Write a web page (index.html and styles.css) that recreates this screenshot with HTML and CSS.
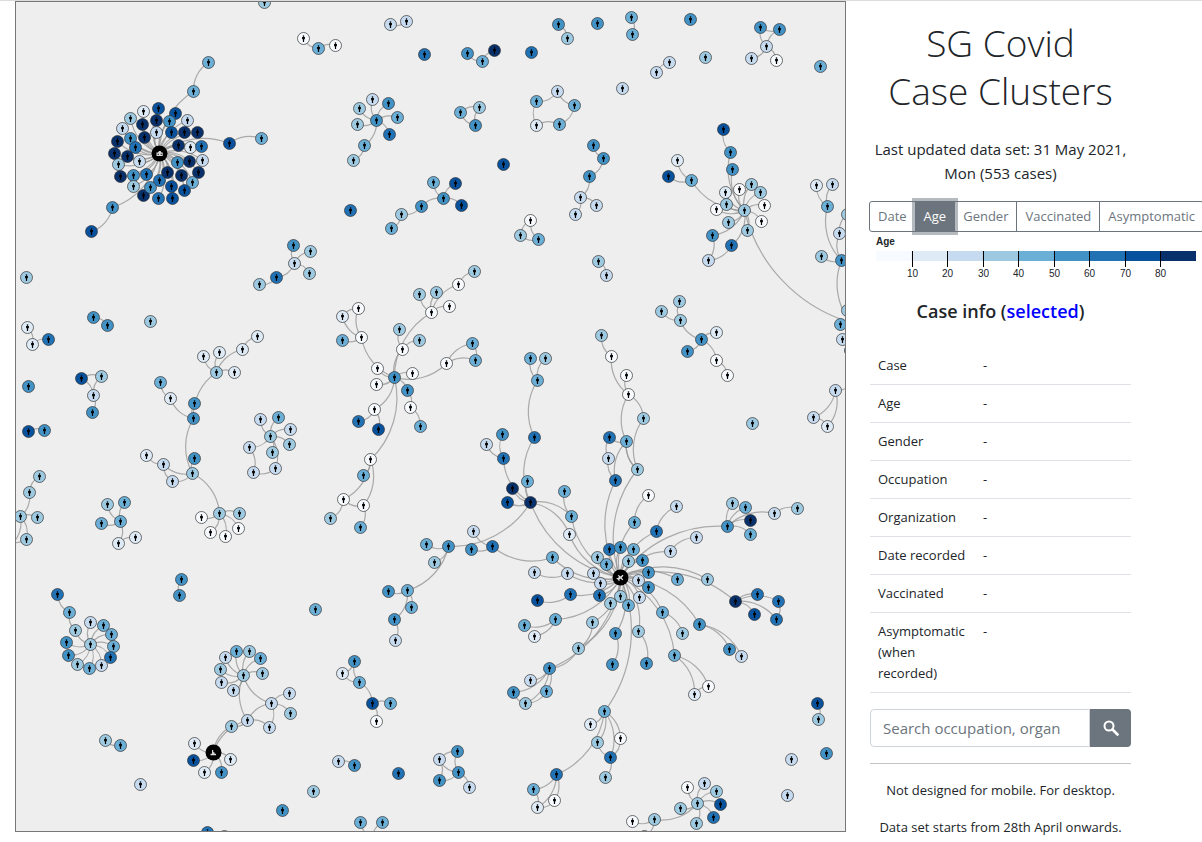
FILE: index.html
```html
<!DOCTYPE html>
<html lang="en">
<head>
<meta charset="utf-8">
<title>SG Covid Case Clusters</title>
<link rel="stylesheet" href="styles.css">
</head>
<body>
<div class="layout">
  <main class="graph">
    <svg class="graph-canvas" id="graph" viewBox="15.5 1.5 829 829" role="img" aria-label="Case clusters">
      <defs>
        <g id="person">
          <circle cx="0" cy="-2.4" r="0.8"/>
          <path d="M-1.4-1.4H1.4V0.8H0.6V3.4H-0.6V0.8H-1.4Z"/>
        </g>
      </defs>
      <g id="links" class="links"></g>
      <g id="nodes"></g>
      <g class="hub-icon">
        <path fill-rule="evenodd" d="M156 155.500v-3.500h1.500l1-1.500h1.500l1 1.500h1.200v3.500zM157.200 154.500h1v-1.200h-1zM160.200 154.500h1v-1.200h-1z"/>
        <path d="M618 574.500l2.200 1.500 1.800-1.800 1 1-1.800 1.800 1.500 2.200-.8.600-2-1.700-1 1 .2 1.200-.700.500-.9-1.800-1.700-.8.600-.7 1.100.1 1-1-1.300-1.500z"/>
        <path d="M211.500 749.500h1.200v2.200h1.300v1.500h1.500v1.500h-5.500v-1.500h1.500z"/>
      </g>
    </svg>
  </main>
  <aside class="side">
    <h1 class="title">SG Covid<br>Case Clusters</h1>
    <p class="updated">Last updated data set: 31 May 2021, Mon (553 cases)</p>
    <div class="btn-group" role="group" aria-label="Colour by">
      <button type="button" class="btn">Date</button>
      <button type="button" class="btn btn-active" aria-pressed="true">Age</button>
      <button type="button" class="btn">Gender</button>
      <button type="button" class="btn">Vaccinated</button>
      <button type="button" class="btn">Asymptomatic</button>
    </div>
    <svg class="legend" id="legend" width="332" height="50" viewBox="0 0 332 50" aria-label="Age legend">
      <text class="legend-title" x="6" y="13">Age</text>
    </svg>
    <h2 class="info-title">Case info (<a href="#selected">selected</a>)</h2>
    <table class="info" id="selected">
      <tbody>
        <tr><th scope="row">Case</th><td>-</td></tr>
        <tr><th scope="row">Age</th><td>-</td></tr>
        <tr><th scope="row">Gender</th><td>-</td></tr>
        <tr><th scope="row">Occupation</th><td>-</td></tr>
        <tr><th scope="row">Organization</th><td>-</td></tr>
        <tr><th scope="row">Date recorded</th><td>-</td></tr>
        <tr><th scope="row">Vaccinated</th><td>-</td></tr>
        <tr><th scope="row">Asymptomatic (when recorded)</th><td>-</td></tr>
      </tbody>
    </table>
    <form class="search">
      <input class="search-input" type="text" aria-label="Search cases" placeholder="Search occupation, organ">
      <button class="search-btn" type="button" aria-label="Search">
        <svg width="16" height="16" viewBox="0 0 16 16" fill="none" stroke="#fff"><circle cx="6" cy="6" r="4.500" stroke-width="2"/><path d="M9.500 9.500l5 5" stroke-width="2.600" stroke-linecap="round"/></svg>
      </button>
    </form>
    <hr class="rule">
    <p class="note">Not designed for mobile. For desktop.</p>
    <p class="note">Data set starts from 28th April onwards.</p>
  </aside>
</div>
<script src="graph.js"></script>
</body>
</html>
```

FILE: styles.css
```css
*, *::before, *::after { box-sizing: border-box; }

body {
  margin: 0;
  overflow-x: hidden;
  border-top: 1px solid #dcdce0;
  background: #fff;
  color: #212529;
  font-family: "Open Sans", "Noto Sans", sans-serif;
  font-size: 15px;
  line-height: 24px;
}

.layout {
  display: grid;
  grid-template-columns: minmax(0, 1fr) 261px;
  gap: 24px;
  padding-left: 15px;
  padding-right: 71px;
  align-items: start;
}

.graph-canvas {
  display: block;
  width: 100%;
  border: 1px solid #777;
  background: #eee;
}
.links { fill: none; stroke: #999; stroke-opacity: .8; stroke-width: 1.2; }
.node { stroke: #333; stroke-width: .7; }
.hub { fill: #000; }
.hub-icon { fill: #ddd; }

.side { padding-top: 18px; text-align: center; }

.title {
  margin: 0 0 22px;
  font-size: 37px;
  font-weight: 300;
  line-height: 48px;
}
.updated { margin: 0 -8px 16px; }

.btn-group { display: flex; width: max-content; }
.btn {
  margin: 0 0 0 -1px;
  padding: 4px 8px;
  border: 1px solid #6c757d;
  background: #fff;
  color: #6c757d;
  font: inherit;
  font-size: 13px;
  line-height: 21px;
}
.btn:first-child { border-radius: 3px 0 0 3px; }
.btn:last-child { border-radius: 0 3px 3px 0; }
.btn-active {
  position: relative;
  background: #6c757d;
  color: #fff;
  box-shadow: 0 0 0 3px rgba(108, 117, 125, .5);
}

.legend {
  display: block;
  font-family: "Liberation Sans", Arial, sans-serif;
  font-size: 10px;
  fill: #212529;
}
.legend-title { font-weight: 700; }
.legend-tick { stroke: #000; shape-rendering: crispEdges; }

.info-title {
  margin: 17px 0 24px;
  font-size: 18px;
  font-weight: 600;
  line-height: 24px;
}
.info-title a { color: #00f; text-decoration: none; }

.info {
  width: 100%;
  table-layout: fixed;
  border-collapse: collapse;
  font-size: 13px;
  line-height: 21px;
  text-align: left;
}
.info th, .info td {
  padding: 8px;
  border-bottom: 1px solid #dee2e6;
  font-weight: 400;
  vertical-align: top;
}
.info th { width: 105px; }

.search { display: flex; margin-top: 16px; }
.search-input {
  flex: 1;
  min-width: 0;
  height: 38px;
  padding: 6px 12px;
  border: 1px solid #ced4da;
  border-radius: 4px 0 0 4px;
  font: inherit;
}
.search-input::placeholder { color: #6c757d; }
.search-btn {
  display: flex;
  align-items: center;
  justify-content: center;
  width: 41px;
  border: 0;
  border-radius: 0 4px 4px 0;
  background: #6c757d;
}

.rule { margin: 16px 0; border: 0; border-top: 1px solid #c4c4c4; }
.note { margin: 0 0 16px; font-size: 13px; line-height: 21px; }
.note:last-child { margin-bottom: 0; }
```

FILE: graph.js
```js
const COLORS = ["#f7fbff", "#deebf7", "#c6dbef", "#9ecae1", "#6baed6", "#4292c6", "#2171b5", "#08519c", "#08306b"];
const NS = "http://www.w3.org/2000/svg";

// Each node is "x,y,age band" ("h" marks a cluster hub); parentheses hold the cases linked from it.
const TREES = `
264,2,3 424,54,6 531,52,6 597,23,5 690,19,5 705,57,3 622,88,2 820,66,4 503,164,7 350,210,6
26,277,3 150,321,3 28,386,5 752,423,3 315,609,4 140,784,2 313,791,3 282,810,5 398,773,6
826,753,5 791,759,2 787,795,2 207,832,6 224,836,2
159,153,h ( 143,111,1 158,108,7 175,113,7 130,118,3 142,124,8 156,120,8 169,121,5 187,120,2
 122,128,2 130,138,5 144,137,8 156,132,2 171,132,7 184,132,8 197,132,8 117,141,8 135,147,6
 178,145,8 190,147,1 201,146,6 114,153,8 127,156,8 139,161,2 177,162,5 189,161,8 202,160,2
 118,164,3 120,176,8 133,175,5 146,174,6 159,180,6 167,172,8 181,175,8 198,172,8 192,182,4
 184,190,7 171,186,7 172,198,7 158,198,6 143,195,8 150,187,5 133,186,3
 193,91,4 ( 208,62,4 ) 229,143,7 ( 261,138,4 ) 112,207,5 ( 91,231,7 ) )
318,48,4 ( 303,38,0 335,45,0 )
406,21,2 ( 390,24,2 )
482,61,4 ( 467,53,5 494,50,8 )
558,24,5 ( 567,38,3 )
376,120,5 ( 359,108,3 372,99,2 388,103,5 397,117,4 389,134,6 357,124,3 364,145,4 ( 353,160,3 ) )
475,125,5 ( 460,112,4 ( 479,107,3 ) )
574,105,4 ( 557,91,2 ( 536,101,4 ) 559,124,4 ) 536,125,1
421,206,5 ( 443,198,5 ( 433,182,4 455,183,7 461,205,7 ) 401,214,3 ( 391,228,4 ) )
538,239,4 ( 520,235,3 530,220,0 )
631,17,4 ( 632,34,4 )
656,72,2 ( 669,62,2 )
766,46,2 ( 760,27,5 779,29,5 751,58,2 776,60,0 )
603,158,5 ( 593,145,5 589,176,5 ( 580,197,2 ( 596,205,2 575,214,2 ) ) )
744,210,3 ( 732,169,5 730,152,5 ( 723,129,7 ) 691,180,4 ( 677,160,1 668,176,7 ) 725,192,1 739,189,0
 751,184,3 760,192,3 764,205,0 761,221,0 747,230,3 728,222,3 716,209,0 726,204,3
 712,235,5 ( 708,260,2 ) 731,245,6 )
841,260,5 ( 827,206,4 ( 816,185,1 832,184,2 ) 839,233,2 ( 847,214,3 ) 821,256,3 )
847,310,3 840,324,4 842,339,2 850,350,5
835,390,2 ( 813,417,2 ( 827,426,1 ) )
294,263,2 ( 293,245,5 276,277,6 ( 259,284,3 ) 310,251,3 309,273,3 )
27,327,1 ( 32,344,1 ( 48,339,6 ) )
93,317,5 ( 107,325,5 )
81,378,7 ( 101,376,3 93,395,2 ( 92,412,5 ) )
28,431,7 ( 44,430,5 )
192,473,3 ( 194,458,5 193,418,5 ( 194,403,5
   216,372,3 ( 203,356,1 219,352,1 234,372,1 242,349,1 ( 257,336,1 ) ) 170,398,1 ( 160,382,4 ) )
 172,481,2 163,464,2 ( 146,455,1 )
 219,513,3 ( 201,517,0 239,513,3 238,528,0 225,536,0 210,532,0 ) )
270,436,3 ( 260,419,2 278,417,4 290,429,2 289,444,3 272,452,3 249,447,2 ( 253,472,2 ) 275,468,2 )
446,363,0 ( 472,343,4 475,360,4 394,377,5 (
  361,337,0 ( 342,316,1 358,308,0 342,340,4 ) 377,368,0 376,384,0 412,373,0
  407,390,5 ( 410,407,0 ( 420,426,4 ) ) 374,409,0 ( 358,421,6 378,429,7 )
  402,349,0 ( 399,329,3 419,340,3 )
  431,312,0 ( 419,294,3 436,292,3 449,306,0 458,284,0 ( 474,271,3 ) )
  370,459,0 ( 363,475,4 363,505,0 ( 360,527,4 ) 343,499,0 ( 330,518,3 ) ) ) )
598,261,3 ( 606,275,2 )
701,339,5 ( 716,332,1 687,351,5 680,320,3 ( 661,311,3 679,301,3 ) 716,360,0 ( 727,375,0 ) )
620,577,h (
  609,549,6 620,547,5 633,549,4 628,561,3 642,560,5 597,557,3 606,564,4 593,573,2 600,583,2 599,595,6
  610,603,3 620,596,3 628,605,4 639,597,2 638,580,2 648,572,5 648,587,5
  615,480,6 ( 608,458,2 ( 609,437,6 ) )
  637,469,3 ( 643,418,3 626,441,4 ( 628,394,0 ( 611,356,0 ( 601,335,3 ) 626,375,0 ) ) )
  634,522,4 ( 648,495,0 ) 656,531,6 ( 676,506,2 ) 670,551,2 ( 696,537,2 )
  727,526,5 ( 732,503,3 745,507,4 750,520,8 750,534,4 774,513,2 ( 797,508,3 ) )
  677,579,4 707,579,3 735,601,8 ( 757,594,6 778,601,6 754,614,7 776,619,6 )
  662,612,4 ( 682,633,3 ) 699,624,5 ( 729,649,5 741,656,2 ) 674,655,4 ( 694,694,1 708,686,0 )
  638,631,3 ( 646,663,5 ) 615,633,5 ( 612,664,5 ) 592,622,3 ( 578,648,3 )
  549,668,5 ( 530,680,2 513,692,5 525,703,3 546,691,4 )
  604,711,4 ( 590,724,1 597,742,3 620,738,0 610,757,6 ( 605,777,3 )
    556,774,6 ( 533,789,4 537,807,1 554,800,0 ) )
  530,502,8 ( 507,502,7 512,488,8 527,481,4 503,458,6 ( 486,444,2 502,434,5 )
    534,437,6 ( 537,380,4 ( 530,358,4 545,358,3 ) )
    448,546,5 ( 426,544,4 434,562,3 407,590,4 ( 388,591,5 411,607,4 394,619,5 ( 395,640,2 ) ) ) )
  571,516,4 ( 564,491,4 ) 569,534,1
  552,557,4 ( 492,546,6 ( 471,549,5 473,531,2 ) ) 567,573,2 ( 534,572,2 )
  570,594,6 ( 537,600,7 ) 555,619,4 ( 524,625,4 534,636,1 ) )
29,492,3 ( 20,516,3 ( 37,517,3 26,539,3 ) 39,476,3 )
120,521,4 ( 107,504,3 124,502,4 101,523,4 118,543,1 ( 135,537,1 ) )
179,595,5 ( 181,579,5 )
90,644,3 ( 75,630,3 ( 69,612,4 ( 57,594,6 ) ) 90,622,2 103,625,4 111,634,4 113,646,4 110,657,6
 66,642,5 68,655,5 77,664,3 89,668,4 101,665,2 )
213,752,h ( 194,743,1 193,760,7 204,772,1 221,772,5 230,759,1 231,726,3
 247,720,2 ( 243,675,3 ( 225,657,2 236,651,4 249,651,3 260,658,4 262,673,3 220,669,3 221,682,2 233,690,2 )
 271,703,2 ( 289,693,2 290,713,3 ) 269,727,2 ) )
120,745,4 ( 105,740,3 )
372,837,7 ( 360,822,4 382,822,4 )
359,682,4 ( 354,661,5 ( 342,673,1 ) 372,703,7 ( 390,703,4 376,721,0 ) )
338,761,2 ( 354,765,5 )
458,772,5 ( 439,759,2 457,751,5 439,780,5 469,787,2 )
817,703,7 ( 818,719,3 )
697,803,3 ( 687,787,0 704,783,2 716,791,3 720,804,7 713,817,6 696,823,3 680,808,3
 654,819,3 ( 632,821,0 644,836,3 ) )`;

// Links that close a loop or lead outside the visible area.
const EXTRA = `
475,125>479,107 536,125>536,101 536,125>559,124 520,235>530,220 779,29>760,27 731,245>708,260
850,322>744,210 850,322>841,260 850,383>835,390 835,390>827,426 93,395>101,376
172,481>163,464 275,468>253,472 342,316>358,308 472,343>475,360
626,441>609,437 615,480>626,441 628,394>643,418 637,469>626,441
530,502>571,516 530,502>569,534 363,505>343,499 620,577>578,648 578,648>549,668
546,691>525,703 525,703>513,692 620,738>610,757 610,757>597,742 533,789>537,807 554,800>537,807
778,601>776,619 694,694>708,686 20,516>10,545 26,539>8,540 247,720>231,726
271,703>243,675 271,703>269,727 359,682>342,673 439,759>457,751 439,759>439,780`;

function add(parent, name, attrs) {
  const el = document.createElementNS(NS, name);
  for (const key in attrs) el.setAttribute(key, attrs[key]);
  parent.appendChild(el);
  return el;
}

const links = document.getElementById("links");
const nodes = document.getElementById("nodes");

function link(a, b) {
  const r = Math.hypot(b[0] - a[0], b[1] - a[1]);
  add(links, "path", { d: `M${a[0]} ${a[1]}A${r} ${r} 0 0 1 ${b[0]} ${b[1]}` });
}

const stack = [];
let last = null;
for (const token of TREES.trim().split(/\s+/)) {
  if (token === "(") { stack.push(last); continue; }
  if (token === ")") { stack.pop(); continue; }
  const [x, y, band] = token.split(",");
  last = [+x, +y];
  if (stack.length) link(stack[stack.length - 1], last);
  if (band === "h") {
    add(nodes, "circle", { class: "hub", cx: x, cy: y, r: 8 });
  } else {
    add(nodes, "circle", { class: "node", cx: x, cy: y, r: 6, fill: COLORS[band] });
    add(nodes, "use", { href: "#person", x, y });
  }
}
for (const pair of EXTRA.trim().split(/\s+/)) {
  const [a, b] = pair.split(">").map(p => p.split(",").map(Number));
  link(a, b);
}

const legend = document.getElementById("legend");
const step = 320 / COLORS.length;
COLORS.forEach((fill, i) => {
  const x = 6 + i * step;
  add(legend, "rect", { x, y: 19, width: step + (i < 8 ? 1 : 0), height: 10, fill });
});
for (let i = 1; i < COLORS.length; i++) {
  const x = Math.round(6 + i * step) + 0.5;
  add(legend, "line", { class: "legend-tick", x1: x, x2: x, y1: 19, y2: 35 });
  add(legend, "text", { x, y: 45, "text-anchor": "middle" }).textContent = i * 10;
}
```
